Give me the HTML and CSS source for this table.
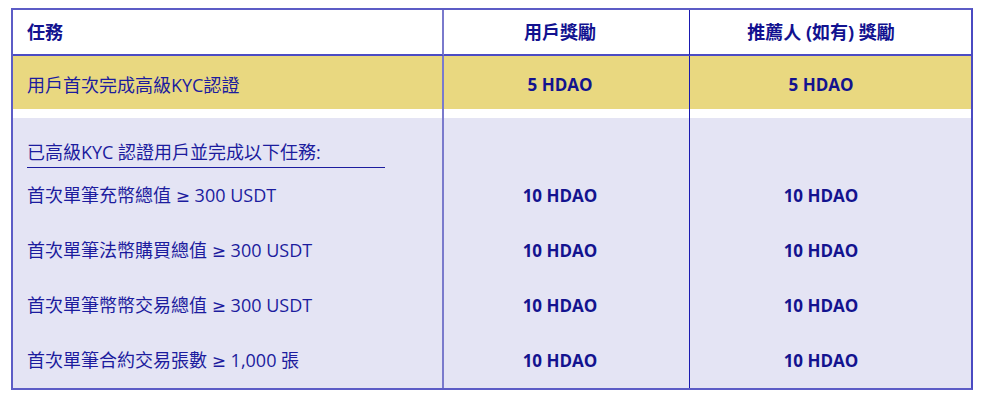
FILE: index.html
```html
<!DOCTYPE html>
<html lang="zh-Hant">
<head>
<meta charset="utf-8">
<link rel="stylesheet" href="styles.css">
</head>
<body>
<div class="table">
  <div class="cell head c1 task">任務</div>
  <div class="cell head c2 val">用戶獎勵</div>
  <div class="cell head c3 val">推薦人 (如有) 獎勵</div>

  <div class="cell yellow c1 task">用戶首次完成高級KYC認證</div>
  <div class="cell yellow c2 val bold">5 HDAO</div>
  <div class="cell yellow c3 val bold">5 HDAO</div>

  <div class="cell gap c1"></div>
  <div class="cell gap c2"></div>
  <div class="cell gap c3"></div>

  <div class="cell lav intro c1 task"><span class="intro-text">已高級KYC 認證用戶並完成以下任務:</span></div>
  <div class="cell lav intro c2"></div>
  <div class="cell lav intro c3"></div>

  <div class="cell lav row c1 task"><span>首次單筆充幣總值 <span class="ge">≥</span> 300 USDT</span></div>
  <div class="cell lav row c2 val bold">10 HDAO</div>
  <div class="cell lav row c3 val bold">10 HDAO</div>

  <div class="cell lav row c1 task"><span>首次單筆法幣購買總值 <span class="ge">≥</span> 300 USDT</span></div>
  <div class="cell lav row c2 val bold">10 HDAO</div>
  <div class="cell lav row c3 val bold">10 HDAO</div>

  <div class="cell lav row c1 task"><span>首次單筆幣幣交易總值 <span class="ge">≥</span> 300 USDT</span></div>
  <div class="cell lav row c2 val bold">10 HDAO</div>
  <div class="cell lav row c3 val bold">10 HDAO</div>

  <div class="cell lav row c1 task"><span>首次單筆合約交易張數 <span class="ge">≥</span> 1,000 張</span></div>
  <div class="cell lav row c2 val bold">10 HDAO</div>
  <div class="cell lav row c3 val bold">10 HDAO</div>
</div>
</body>
</html>
```

FILE: styles.css
```css
* { box-sizing: border-box; }

html, body {
  margin: 0;
  padding: 0;
  background: #ffffff;
}

body {
  padding: 8px 0 0 11px;
  font-family: "Open Sans", "Noto Sans CJK TC", sans-serif;
  color: #1c1c9e;
}

.table {
  display: grid;
  grid-template-columns: 431px 246px 281px;
  width: 962px;
  border: 2px solid #5c5cc6;
  border-right-color: #4a4ac2;
}

.cell {
  display: flex;
  align-items: center;
  font-size: 18px;
  line-height: 24px;
}

.c1 { border-right: 2px solid #7a7acc; }
.c2 { border-right: 1px solid #1a1ab0; }

.task { padding-left: 14px; }

.val {
  justify-content: center;
}
.c2.val { padding-right: 13px; }
.c3.val { padding-right: 19px; }

.head {
  height: 46px;
  font-weight: 700;
  color: #121290;
  background: #ffffff;
  border-bottom: 2px solid #4c4cc4;
}

.yellow {
  height: 53px;
  padding-top: 5px;
  background: #e9d880;
}

.gap {
  height: 9px;
  background: #ffffff;
}

.lav {
  background: #e4e4f4;
}

.intro {
  height: 50px;
  align-items: flex-end;
}

.intro-text {
  display: block;
  width: 358px;
  padding-bottom: 3px;
  border-bottom: 1px solid #1c1c9e;
}

.row {
  height: 55px;
}

.ge {
  font-family: "DejaVu Sans", sans-serif;
  font-size: 17px;
}

.bold {
  font-size: 17px;
  font-weight: 700;
  color: #13138f;
}
```
